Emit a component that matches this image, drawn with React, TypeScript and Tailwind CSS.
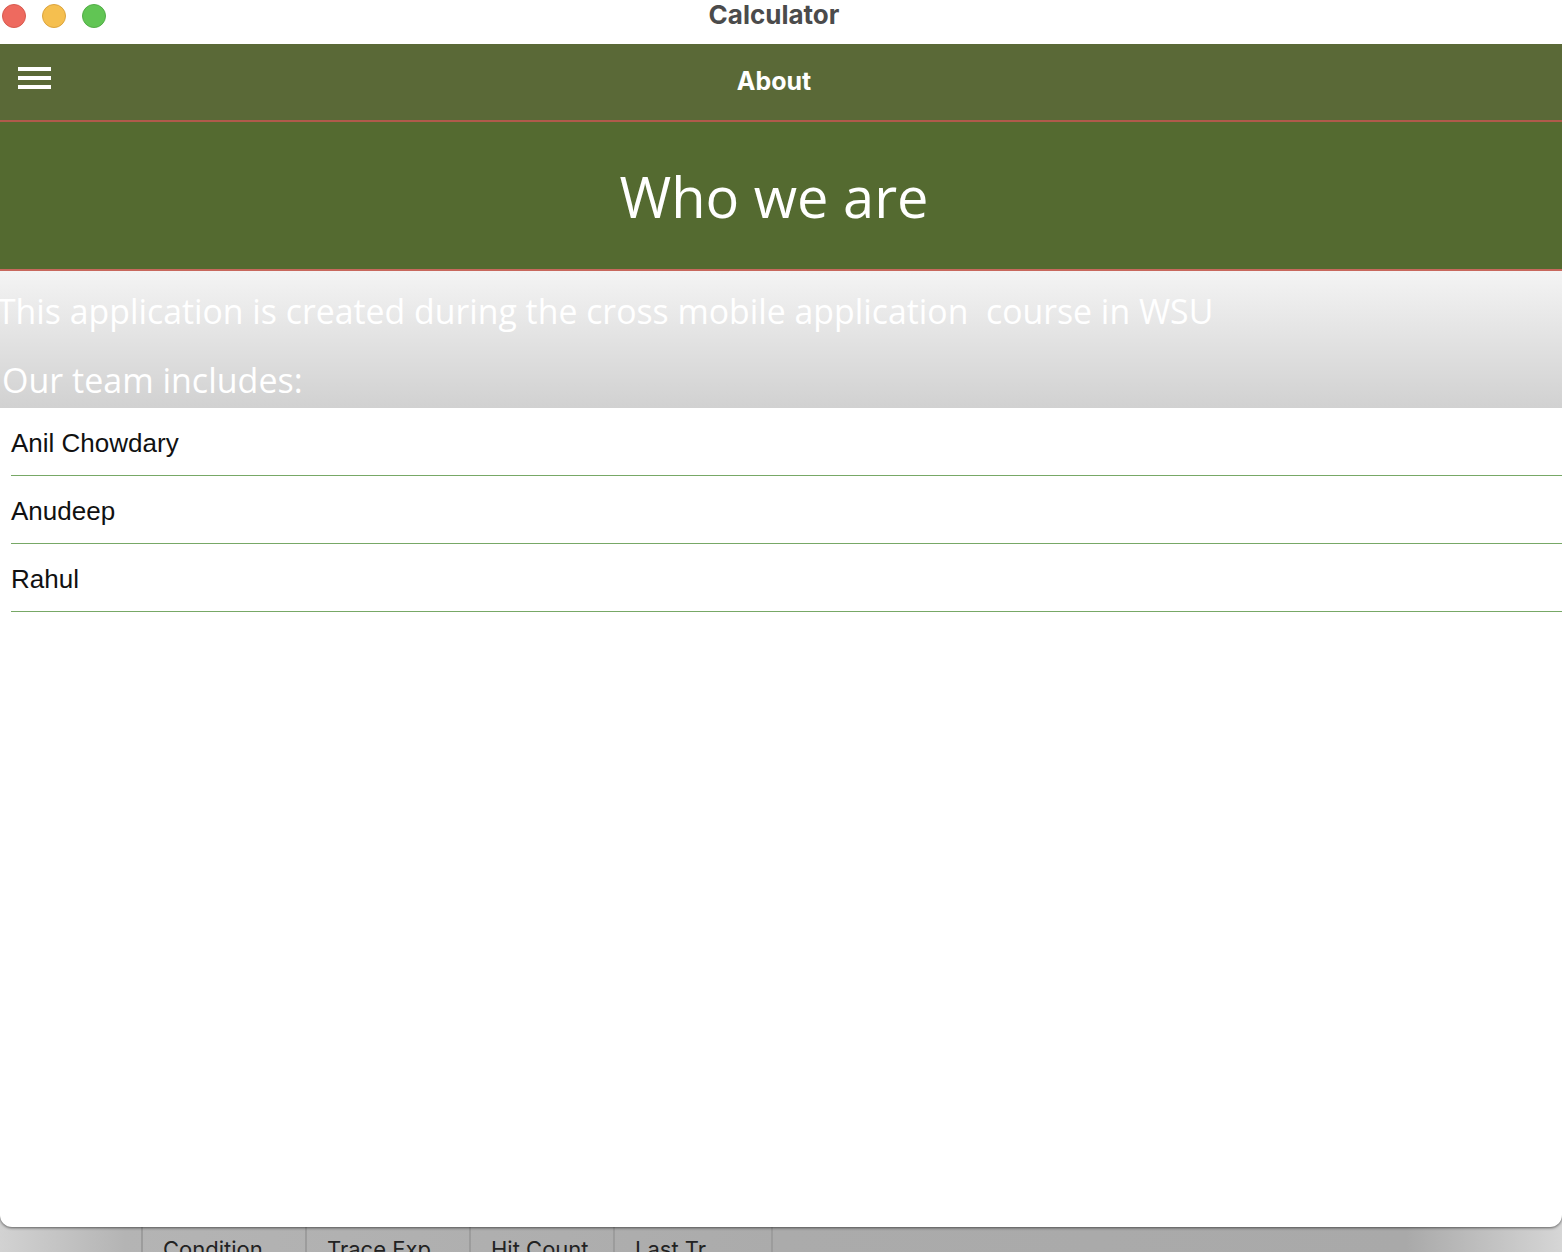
import React from "react";

const names = ["Anil Chowdary", "Anudeep", "Rahul"];

export default function App() {
  return (
    <div className="relative flex h-[1252px] w-[1562px] flex-col overflow-hidden bg-[linear-gradient(90deg,#d2d2d2_0%,#b4b4b4_8%,#ababab_50%,#a9a9a9_90%,#d6d6d6_100%)]">
      {/* window */}
      <div className="relative z-10 flex h-[1227px] flex-col overflow-hidden rounded-b-[12px] bg-white shadow-[0_1px_3px_rgba(0,0,0,0.55)]">
        {/* title bar */}
        <div className="relative flex h-[44px] shrink-0 items-start justify-center bg-white pr-[14px]">
          <div className="absolute left-[2px] top-[4px] flex gap-[16px]">
            <span className="h-[24px] w-[24px] rounded-full border border-[#d85a4f] bg-[#ee6a5f]" />
            <span className="h-[24px] w-[24px] rounded-full border border-[#dca43d] bg-[#f5bf4f]" />
            <span className="h-[24px] w-[24px] rounded-full border border-[#52ad47] bg-[#61c554]" />
          </div>
          <span className="font-['Inter',sans-serif] text-[26px] font-bold leading-[30px] text-[#4b4b4b]">
            Calculator
          </span>
        </div>
        {/* nav bar */}
        <div className="relative flex h-[78px] shrink-0 items-center justify-center border-b-2 border-[#b05a4b] bg-[#5a6937] pr-[14px]">
          <div className="absolute left-[18px] top-[23px] flex flex-col gap-[5px]">
            <span className="h-[4px] w-[33px] bg-white" />
            <span className="h-[4px] w-[33px] bg-white" />
            <span className="h-[4px] w-[33px] bg-white" />
          </div>
          <span className="font-['Inter',sans-serif] text-[25px] font-bold text-white">About</span>
        </div>
        {/* header */}
        <div className="flex h-[149px] shrink-0 items-center justify-center border-b-2 border-[#c8685d] bg-[#546a30] pr-[14px]">
          <span className="font-['Open_Sans',sans-serif] text-[56px] leading-none text-white">Who we are</span>
        </div>
        {/* gradient intro */}
        <div className="flex h-[137px] shrink-0 flex-col bg-[linear-gradient(180deg,#f4f4f4_0%,#e4e4e4_45%,#d1d1d1_100%)] font-['Open_Sans',sans-serif] text-white">
          <div className="ml-[-3px] mt-[18px] whitespace-pre text-[33.8px] leading-[44px]">
            This application is created during the cross mobile application  course in WSU
          </div>
          <div className="ml-[2px] mt-[25px] text-[34px] leading-[44px]">Our team includes:</div>
        </div>
        {/* list */}
        <div className="flex flex-col">
          {names.map((n) => (
            <div key={n} className="ml-[11px] flex flex-col">
              <div className="flex h-[67px] items-center pt-[3px]">
                <span className="font-['Liberation_Sans',Arial,sans-serif] text-[26px] text-[#111]">{n}</span>
              </div>
              <div className="h-px bg-[#77a866]" />
            </div>
          ))}
        </div>
      </div>
      {/* bottom toolbar */}
      <div className="-mt-[12px] flex h-[37px] pt-[12px] font-['Inter',sans-serif] text-[22px] text-[#222]">
        <div className="w-[143px] border-r-2 border-[#9c9c9c]" />
        <div className="w-[164px] border-r-2 border-[#9c9c9c] pl-[20px] pt-[9px] leading-[26px]">Condition</div>
        <div className="w-[164px] border-r-2 border-[#9c9c9c] pl-[20px] pt-[9px] leading-[26px]">Trace Exp</div>
        <div className="w-[144px] border-r-2 border-[#9c9c9c] pl-[20px] pt-[9px] leading-[26px]">Hit Count</div>
        <div className="w-[158px] border-r-2 border-[#9c9c9c] pl-[20px] pt-[9px] leading-[26px]">Last Tr</div>
      </div>
    </div>
  );
}
